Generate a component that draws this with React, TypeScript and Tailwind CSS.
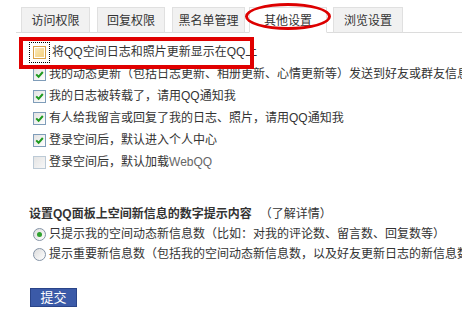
import React from "react";

type BoxKind = "checked" | "hover" | "off";

const Box = ({ kind }: { kind: BoxKind }) => {
  if (kind === "hover") {
    return (
      <span className="relative flex h-[21px] w-[21px] shrink-0 items-center justify-center border border-dotted border-black -ml-[4px] -mr-[1px]">
        <span className="flex h-[13px] w-[13px] items-center justify-center border border-[#d8a048] bg-white">
          <span className="h-[9px] w-[9px] bg-gradient-to-br from-[#fbe9b8] to-[#f3cf7d]" />
        </span>
      </span>
    );
  }
  if (kind === "off") {
    return (
      <span className="h-[13px] w-[13px] shrink-0 border border-[#bccad6] bg-gradient-to-br from-[#e4e4e4] to-[#f7f7f7]" />
    );
  }
  return (
    <span className="flex h-[13px] w-[13px] shrink-0 items-center justify-center border border-[#7f9db9] bg-gradient-to-br from-[#e2e2e2] to-white">
      <svg width="9" height="9" viewBox="0 0 9 9">
        <path d="M1.2 4.4 L3.6 6.8 L7.8 2" fill="none" stroke="#1e9a1e" strokeWidth="2" />
      </svg>
    </span>
  );
};

const Radio = ({ on }: { on?: boolean }) => (
  <span className="flex h-[13px] w-[13px] shrink-0 items-center justify-center rounded-full border border-[#8493a6] bg-gradient-to-br from-[#dcdcdc] to-white">
    {on && <span className="h-[5px] w-[5px] rounded-full bg-[#2fa22f]" />}
  </span>
);

const tabs = [
  { label: "访问权限", cls: "ml-[5px] w-[69px]" },
  { label: "回复权限", cls: "ml-[7px] w-[68px]" },
  { label: "黑名单管理", cls: "ml-[7px] w-[73px]" },
  { label: "其他设置", cls: "ml-[4px] w-[78px]", active: true },
  { label: "浏览设置", cls: "ml-[6px] w-[70px]" },
];

const rows: { kind: BoxKind; text: React.ReactNode }[] = [
  { kind: "hover", text: "将QQ空间日志和照片更新显示在QQ上" },
  { kind: "checked", text: "我的动态更新（包括日志更新、相册更新、心情更新等）发送到好友或群友信息" },
  { kind: "checked", text: "我的日志被转载了，请用QQ通知我" },
  { kind: "checked", text: "有人给我留言或回复了我的日志、照片，请用QQ通知我" },
  { kind: "checked", text: "登录空间后，默认进入个人中心" },
  {
    kind: "off",
    text: (
      <>
        登录空间后，默认加载<span className="text-[#666]">WebQQ</span>
      </>
    ),
  },
];

export default function App() {
  return (
    <div className="relative h-[316px] w-[462px] overflow-hidden bg-white text-[12px] leading-none text-[#333] [font-family:'Liberation_Sans','Noto_Sans_CJK_SC',sans-serif]">
      {/* Tabs */}
      <div className="ml-[16px] mt-[7px] flex border-b border-[#dcdcdc]">
        {tabs.map((t) => (
          <div
            key={t.label}
            className={`${t.cls} -mb-px flex h-[26px] items-center justify-center border border-[#e0e0e0] ${
              t.active ? "border-b-white bg-white" : "border-b-[#dcdcdc] bg-[#f1f1f1]"
            }`}
          >
            <span className="pt-[2px]">{t.label}</span>
          </div>
        ))}
      </div>

      {/* Checkbox options */}
      <div className="mt-[8px] flex flex-col">
        {rows.map((r, i) => (
          <div key={i} className="flex h-[22px] items-center gap-[3px] whitespace-nowrap pl-[33px]">
            <Box kind={r.kind} />
            <span>{r.text}</span>
          </div>
        ))}
      </div>

      {/* QQ panel hint */}
      <div className="mt-[31px] pl-[29px] whitespace-nowrap">
        <div className="flex h-[20px] items-center">
          <span className="font-bold">设置QQ面板上空间新信息的数字提示内容</span>
          <span className="ml-[8px]">（了解详情）</span>
        </div>
        <div className="flex h-[20px] items-center gap-[3px] pl-[4px]">
          <Radio on />
          <span>只提示我的空间动态新信息数（比如：对我的评论数、留言数、回复数等）</span>
        </div>
        <div className="flex h-[20px] items-center gap-[3px] pl-[4px]">
          <Radio />
          <span>提示重要新信息数（包括我的空间动态新信息数，以及好友更新日志的新信息数</span>
        </div>
      </div>

      <div className="mt-[24px] pl-[30px]">
        <button className="flex h-[19px] w-[47px] items-center justify-center border border-[#2a4488] bg-[#3b5aa8] text-[13px] text-white">
          提交
        </button>
      </div>

      {/* annotations */}
      <div className="absolute left-[245px] top-[3px] h-[27px] w-[86px] rounded-[50%] border-[3px] border-[#dd0000]" />
      <div className="absolute left-[19px] top-[37px] h-[32px] w-[235px] border-[4px] border-[#e00000]" />
    </div>
  );
}
